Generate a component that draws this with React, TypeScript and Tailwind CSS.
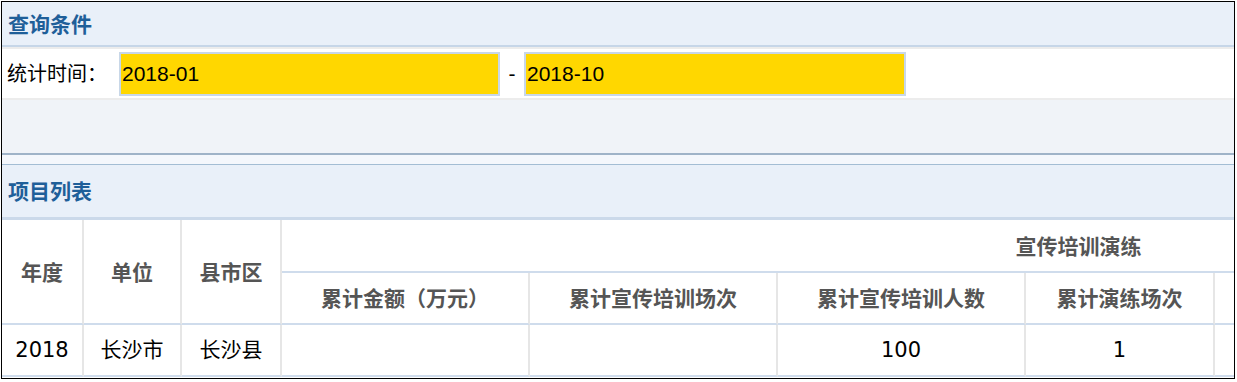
import React from "react";

const cols = "grid-cols-[82px_98px_100px_248px_248px_248px_189px_662px]";

const th =
  "flex items-center justify-center border-r-2 border-b-2 border-r-[#e6e6e6] border-b-[#cfdcec] text-[21px] font-semibold text-[#555] font-['Noto_Sans_CJK_SC',sans-serif]";
const td =
  "flex items-center justify-center border-r-2 border-b-2 border-r-[#e6e6e6] border-b-[#cfdcec] pt-[2px] text-[21px] text-black font-['DejaVu_Sans','Noto_Sans_CJK_SC',sans-serif]";

const SectionTitle: React.FC<{ title: string; className: string }> = ({
  title,
  className,
}) => (
  <div
    className={`flex items-center bg-[#e9f0f9] pl-[6px] text-[21px] font-bold text-[#1f5f99] font-['Noto_Sans_CJK_SC',sans-serif] ${className}`}
  >
    {title}
  </div>
);

export default function App() {
  const subHeads = [
    "累计金额（万元）",
    "累计宣传培训场次",
    "累计宣传培训人数",
    "累计演练场次",
    "",
  ];
  const data = ["", "", "100", "1", ""];

  return (
    <div className="ml-[1px] mt-[1px] w-[1234px] h-[378px] overflow-hidden border border-black bg-white font-['Liberation_Sans','Noto_Sans_CJK_SC',sans-serif]">
      {/* 查询条件 */}
      <SectionTitle
        title="查询条件"
        className="h-[45px] border-b-2 border-[#c6d6e8]"
      />
      <div className="flex h-[53px] items-center border-y-2 border-[#ececec] bg-white pl-[5px]">
        <span className="w-[112px] text-[20px] text-black">统计时间：</span>
        <div className="flex h-[44px] w-[381px] items-center border-2 border-[#c8d7e8] bg-[#ffd700] pl-[1px] text-[21px] text-black">
          2018-01
        </div>
        <span className="w-[24px] text-center text-[21px] text-black">-</span>
        <div className="flex h-[44px] w-[382px] items-center border-2 border-[#c8d7e8] bg-[#ffd700] pl-[1px] text-[21px] text-black">
          2018-10
        </div>
      </div>
      <div className="h-[55px] border-b-2 border-[#9fb3c8] bg-[#f0f3f8]" />
      <div className="h-[10px] border-b border-[#a3bdd4] bg-[#f4f7fc]" />

      {/* 项目列表 */}
      <SectionTitle
        title="项目列表"
        className="h-[55px] border-b-[3px] border-[#cbd9ea]"
      />
      <div className={`grid ${cols} grid-rows-[53px_52px_52px] w-[1875px]`}>
        <div className={`${th} row-span-2`}>年度</div>
        <div className={`${th} row-span-2`}>单位</div>
        <div className={`${th} row-span-2`}>县市区</div>
        <div className={`${th} col-span-5 border-r-0`}>宣传培训演练</div>
        {subHeads.map((h, i) => (
          <div key={i} className={th}>
            {h}
          </div>
        ))}
        <div className={td}>2018</div>
        <div className={td}>长沙市</div>
        <div className={td}>长沙县</div>
        {data.map((d, i) => (
          <div key={i} className={td}>
            {d}
          </div>
        ))}
      </div>
    </div>
  );
}
